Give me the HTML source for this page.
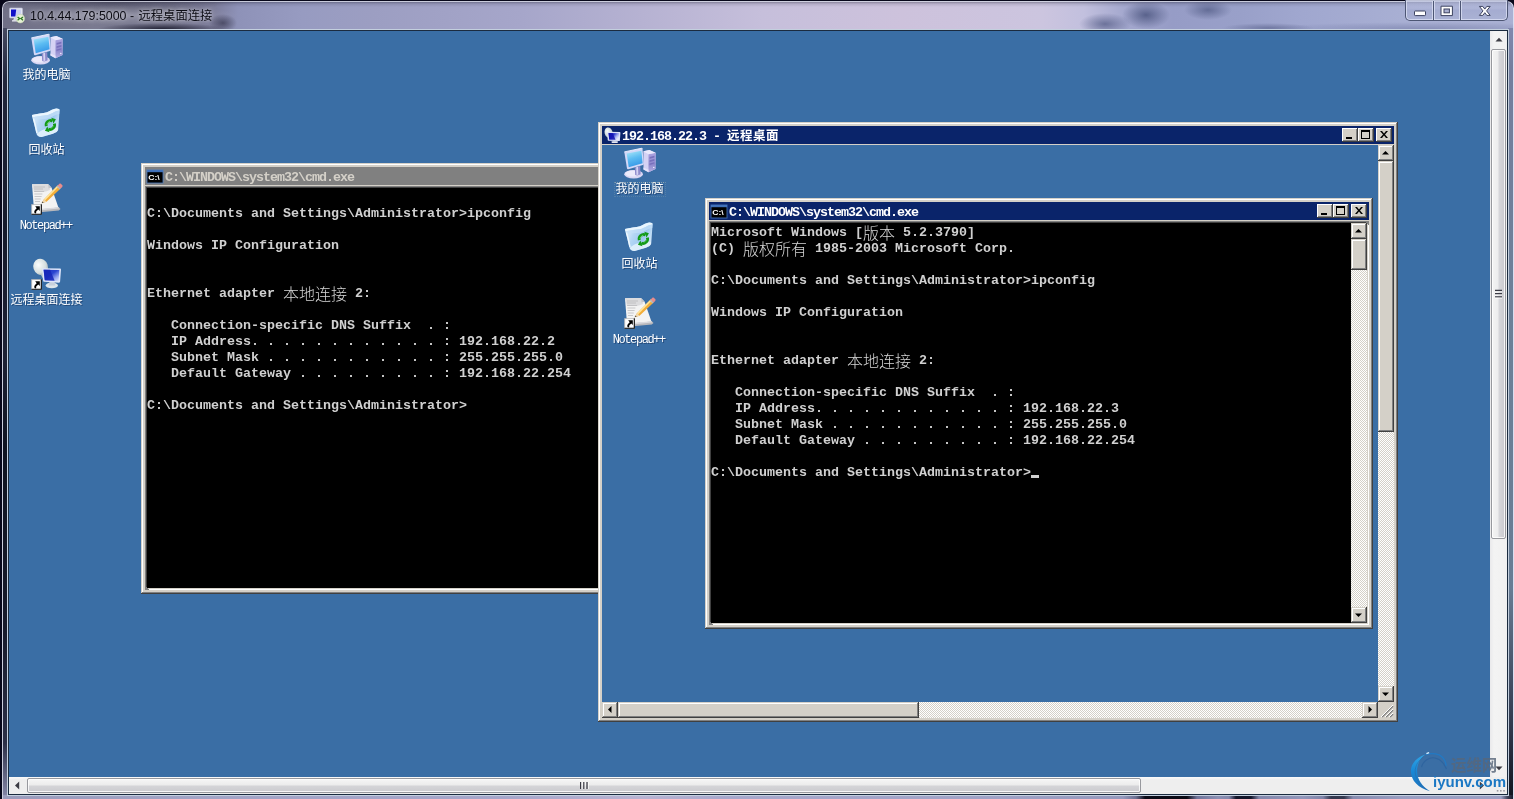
<!DOCTYPE html>
<html lang="zh-CN">
<head>
<meta charset="utf-8">
<title>10.4.44.179:5000 - 远程桌面连接</title>
<style>
*{box-sizing:border-box;margin:0;padding:0}
html,body{width:1514px;height:799px;overflow:hidden;background:#07071a}
body{position:relative;font-family:"Liberation Sans","Noto Sans CJK SC",sans-serif}
.abs{position:absolute}
/* ---------- Win7 aero frame ---------- */
#w7{position:absolute;left:2px;top:1px;width:1512px;height:806px;border-radius:7px 7px 0 0;overflow:hidden;
 background:
  linear-gradient(180deg,rgba(30,30,50,.5) 0,rgba(30,30,50,.12) 3px,rgba(30,30,50,0) 6px),
  radial-gradient(ellipse 64px 6px at 160px 28px,rgba(16,16,34,.8),rgba(16,16,34,0) 100%),
  radial-gradient(ellipse 14px 9px at 221px 22px,rgba(24,24,44,.5),rgba(24,24,44,0) 100%),
  radial-gradient(ellipse 120px 10px at 118px 14px,rgba(255,255,255,.2),rgba(255,255,255,0) 100%),
  radial-gradient(ellipse 110px 12px at 110px 2px,rgba(30,30,50,.3),rgba(30,30,50,0) 100%),
  radial-gradient(ellipse 26px 11px at 1103px 23px,rgba(84,92,134,.75),rgba(84,92,134,0) 100%),
  radial-gradient(ellipse 24px 14px at 1144px 14px,rgba(72,82,124,.8),rgba(72,82,124,0) 100%),
  radial-gradient(ellipse 24px 10px at 1206px 9px,rgba(78,88,130,.7),rgba(78,88,130,0) 100%),
  radial-gradient(ellipse 46px 5px at 1266px 27px,rgba(84,92,134,.6),rgba(84,92,134,0) 100%),
  radial-gradient(ellipse 160px 7px at 1420px 28px,rgba(84,92,140,.38),rgba(84,92,140,0) 100%),
  linear-gradient(90deg,#6f6f86 0,#7a7a90 90px,#74748c 170px,#7c7c9a 212px,#8e92b8 236px,#979bc1 300px,#9c9ec2 370px,#a6a6ca 520px,#b6b2d2 640px,#c6bfdb 760px,#cdc2dc 900px,#ccc5df 1040px,#c2c0de 1082px,#a4a8ce 1122px,#969cc6 1170px,#99a0c9 1240px,#a0a7cf 1300px,#a8afd3 1400px,#a9b0d3 1512px);
 box-shadow:inset 0 0 0 1px rgba(235,238,250,.75)}
#w7l{left:3px;top:28px;width:4px;height:772px;background:linear-gradient(180deg,#464a62 0,#22263c 50px,#15192b 200px,#1d2135 330px,#0f1321 420px,#171a2b 600px,#2c3048 715px,#8486a6 768px)}
#w7r{left:1508px;top:28px;width:5px;height:772px;background:linear-gradient(180deg,#8088ae 0,#747e9e 40px,#6c8098 300px,#687c94 560px,#30384c 700px,#10141e 770px)}
#w7b{left:3px;top:795px;width:1510px;height:5px;background:linear-gradient(90deg,#9a9cbc 0,#a2a4c6 200px,#a6a6ca 500px,#b9b3d2 640px,#a8a8cc 720px,#a0a2c6 1000px,#9498bc 1120px,#6c7092 1133px,#0c0c18 1142px,#0a0a14 1184px,#70749a 1194px,#8c90b4 1215px,#8488ac 1226px,#14162a 1233px,#14162a 1248px,#8488ac 1256px,#9296ba 1300px,#8084a8 1320px,#34384e 1328px,#34384e 1341px,#888cb0 1350px,#9a9ec2 1400px,#9ca0c4 1498px,#3a3e54 1505px,#1a1c2c 1510px)}
#cli{left:7px;top:29px;width:1502px;height:767px;border:1px solid rgba(225,236,250,.85);background:#1b2b3f;padding:1px}
#desk{left:9px;top:31px;width:1481px;height:746px;background:#3a6ea5}
/* win7 scrollbars */
#vs{left:1490px;top:31px;width:17px;height:746px;background:linear-gradient(90deg,#e9e9eb 0,#f3f3f3 4px,#f0f0f0 100%)}
#hs{left:9px;top:777px;width:1481px;height:17px;background:linear-gradient(180deg,#fbfbfb 0,#eeeeee 3px,#eeeeee 100%)}
#sc{left:1490px;top:777px;width:17px;height:17px;background:#eeeeee}
.th7{position:absolute;border:1px solid #98999e;border-radius:2px;box-shadow:inset 0 0 0 1px rgba(255,255,255,.8)}
/* ---------- classic widgets ---------- */
.win{position:absolute;background:#d4d0c8;box-shadow:inset -1px -1px #404040,inset 1px 1px #d4d0c8,inset -2px -2px #808080,inset 2px 2px #fff}
.tb{position:absolute;height:18px;background:#0a246a;color:#fff;font-weight:bold;white-space:pre}
.tb.in{background:#808080;color:#d4d0c8}
.tbt{position:absolute;top:2px;height:18px;line-height:18px;font-family:"Liberation Mono","Noto Sans CJK SC",monospace;font-size:13.333px;letter-spacing:-1px;font-weight:bold}
.tbt .cj{font-family:"Noto Sans CJK SC",sans-serif;font-size:12.5px;letter-spacing:.5px;position:relative;top:0}
.btn{position:absolute;background:#d4d0c8;box-shadow:inset -1px -1px #404040,inset 1px 1px #fff,inset -2px -2px #808080,inset 2px 2px #d4d0c8}
.sbtn{position:absolute;width:16px;height:16px;background:#d4d0c8;box-shadow:inset -1px -1px #404040,inset 1px 1px #d4d0c8,inset -2px -2px #808080,inset 2px 2px #fff}
.trk{position:absolute;background-color:#e9e7e3;background-image:conic-gradient(#fff 25%,#d4d0c8 0 50%,#fff 0 75%,#d4d0c8 0);background-size:2px 2px}
.sunk{position:absolute;background:#000;box-shadow:-1px -1px #404040,1px 1px #d4d0c8,-2px -2px #808080,2px 2px #fff,-2px 2px #808080,2px -2px #808080,-1px 1px #404040,1px -1px #404040}
.con{position:absolute;background:#000;color:#d0d0d0;font-family:"Liberation Mono","Noto Sans CJK SC",monospace;font-size:13.333px;font-weight:bold;overflow:hidden}
.con div{height:16px;line-height:16px;white-space:pre;position:relative;top:2px}
.con .cj{font-family:"Noto Sans CJK SC",sans-serif;font-size:16px;font-weight:300;line-height:16px;display:inline-block;height:16px;vertical-align:top;position:relative;top:-1px;color:#d6d6d6}
svg{position:absolute;overflow:visible}
.lbl{position:absolute;width:100px;height:14px;line-height:14px;text-align:center;color:#fff;font-family:"Liberation Mono","Noto Sans CJK SC",monospace;font-size:12px;white-space:pre;text-shadow:1px 1px 0 rgba(16,40,80,.55)}
.lbl.en{letter-spacing:-1.4px}
</style>
</head>
<body>
<div id="root" style="position:absolute;left:0;top:0;width:1514px;height:799px;will-change:transform">
<!-- WIN7 FRAME -->
<div id="w7"></div>
<div class="abs" id="w7l"></div>
<div class="abs" id="w7r"></div>
<div class="abs" id="w7b"></div>
<div class="abs" id="cli"></div>
<div class="abs" id="desk"></div>
<div class="abs" id="vs"></div>
<div class="abs" id="hs"></div>
<div class="abs" id="sc"></div>
<!-- win7 title -->
<svg style="left:9px;top:7px" width="17" height="17" viewBox="0 0 17 17">
 <rect x="0.5" y="1" width="13" height="10" rx="1" fill="#e4e6f4" stroke="#b8bcd4" stroke-width=".6"/>
 <rect x="2" y="2.6" width="10" height="6.8" fill="#c9d0f0"/>
 <path d="M2 2.6h5.2l-.9 6.8H2z" fill="#1010c8"/>
 <path d="M5 11h4l1 2.6H4z" fill="#d8dae8"/>
 <rect x="3" y="13.2" width="8" height="1.3" fill="#e8e8f2"/>
 <circle cx="11.3" cy="11.6" r="4.3" fill="#e6f0d6" stroke="#c4d4b0" stroke-width=".6"/>
 <path d="M8.6 10l2 1.6-2 1.6M14 10l-2 1.6 2 1.6" fill="none" stroke="#2e7a22" stroke-width="1.3"/>
</svg>
<div class="abs" id="w7t" style="left:30px;top:7px;height:18px;line-height:18px;font-size:12.4px;color:#0c0c14;white-space:pre;text-shadow:0 0 6px rgba(255,255,255,.55),0 0 3px rgba(255,255,255,.35)">10.4.44.179:5000 - <span style="font-size:12.3px;margin-left:1px">远程桌面连接</span></div>
<!-- caption buttons -->
<div class="abs" style="left:1405px;top:0;width:103px;height:21px;border:1px solid #4d5674;border-top:0;border-radius:0 0 5px 5px;background:linear-gradient(180deg,rgba(190,196,228,.55) 0,rgba(176,182,216,.5) 45%,rgba(160,168,206,.5) 50%,rgba(172,180,214,.5) 100%);box-shadow:inset 0 0 0 1px rgba(225,230,248,.7)"></div>
<div class="abs" style="left:1433px;top:1px;width:1px;height:19px;background:#4d5674;box-shadow:1px 0 rgba(225,230,248,.7),-1px 0 rgba(225,230,248,.7)"></div>
<div class="abs" style="left:1460px;top:1px;width:1px;height:19px;background:#4d5674;box-shadow:1px 0 rgba(225,230,248,.7),-1px 0 rgba(225,230,248,.7)"></div>
<svg style="left:1405px;top:0" width="103" height="21" viewBox="0 0 103 21">
 <rect x="9.5" y="11" width="11" height="4.6" rx=".8" fill="#fff" stroke="#3c4260" stroke-width="1"/>
 <path d="M36 6.2h11.4v9.4H36z" fill="#fff" stroke="#3c4260" stroke-width="1"/>
 <rect x="39" y="9" width="5.4" height="3.8" fill="#a9afd0" stroke="#3c4260" stroke-width="1"/>
 <path d="M74.4 6.4h3.4l2 2.7 2-2.7h3.4l-3.6 4.5 3.6 4.5h-3.4l-2-2.7-2 2.7h-3.4l3.6-4.5z" fill="#fff" stroke="#3c4260" stroke-width="1" stroke-linejoin="round"/>
</svg>

<!-- win7 scrollbars -->
<svg style="left:1490px;top:31px" width="17" height="17" viewBox="0 0 17 17"><path d="M5.5 10.5L9 6.8l3.5 3.7z" fill="#3c3c44"/></svg>
<div class="th7" style="left:1491px;top:49px;width:15px;height:490px;background:linear-gradient(90deg,#f4f4f4 0,#ededee 45%,#d6d6da 55%,#c9c9ce 100%)"></div>
<svg style="left:1494px;top:289px" width="9" height="9" viewBox="0 0 9 9"><path d="M1 1.5h7M1 4.7h7M1 7.9h7" stroke="#3a3a44" stroke-width="1.4"/><path d="M1 2.7h7M1 5.9h7M1 9.1h7" stroke="#fff" stroke-width=".8"/></svg>
<svg style="left:1490px;top:760px" width="17" height="17" viewBox="0 0 17 17"><path d="M5.5 6.5L9 10.2l3.5-3.7z" fill="#3c3c44"/></svg>
<svg style="left:9px;top:777px" width="17" height="17" viewBox="0 0 17 17"><path d="M10.2 4.6L6 8.5l4.2 3.9z" fill="#3c3c44"/></svg>
<div class="th7" style="left:27px;top:778px;width:1114px;height:15px;background:linear-gradient(180deg,#f6f6f6 0,#ececec 45%,#d4d4d7 55%,#cbcbcf 100%)"></div>
<svg style="left:579px;top:781px" width="10" height="9" viewBox="0 0 10 9"><path d="M1.7 1v7M4.9 1v7M8.1 1v7" stroke="#3a3a44" stroke-width="1.4"/><path d="M2.9 1v7M6.1 1v7M9.3 1v7" stroke="#fff" stroke-width=".8"/></svg>
<svg style="left:1473px;top:777px" width="17" height="17" viewBox="0 0 17 17"><path d="M6.8 4.6L11 8.5l-4.2 3.9z" fill="#3c3c44"/></svg>
<svg style="left:1490px;top:777px" width="17" height="17" viewBox="0 0 17 17"><g fill="#9c9ca4"><rect x="13.200" y="13" width="1.600" height="1.600"/><rect x="10" y="13" width="1.600" height="1.600"/><rect x="6.800" y="13" width="1.600" height="1.600"/></g></svg>

<!-- desktop icons -->
<svg style="left:31px;top:33px" width="32" height="32" viewBox="0 0 32 32"><defs><linearGradient id="scr1" x1=".3" y1="0" x2=".6" y2="1"><stop offset="0" stop-color="#a4e4f8"/><stop offset=".45" stop-color="#5cbcf2"/><stop offset="1" stop-color="#3294e6"/></linearGradient>
<linearGradient id="twr1" x1="0" y1="0" x2="0" y2="1"><stop offset="0" stop-color="#aaa2e0"/><stop offset=".6" stop-color="#8f88cc"/><stop offset="1" stop-color="#b4aee4"/></linearGradient></defs>
<g transform="translate(0,1)">
<ellipse cx="9.600" cy="26.200" rx="9.400" ry="4.200" fill="#d9d6f3"/>
<ellipse cx="8.600" cy="25.600" rx="7.400" ry="3" fill="#eceafa"/>
<path d="M10.800 19.500l5.400-1.600.4 8.400c-1.600 1.200-4.200 1.400-5.400.6z" fill="#8d8acb"/>
<path d="M12.200 19.200l1.800-.5.300 8-1.800.2z" fill="#d4d2f2"/>
<path d="M19.400 3.300l6-1.300 6.200 2.800-.1 16.200-7 3.300-5-2.700z" fill="#d5d2f4"/>
<path d="M24.500 6.200l7.100-1.400-.1 16.200-7 3.300z" fill="url(#twr1)"/>
<path d="M19.400 3.300l6-1.300 6.200 2.800-7.100 1.400z" fill="#ebe9fc"/>
<path d="M19.400 19.500l5.100 2.300v2.500l-5-2.700z" fill="#e6e4fa"/>
<path d="M25.600 9l4.800-1.200v1.700l-4.800 1.300zM25.600 12.300l4.800-1.300v1.700l-4.800 1.300zM25.600 15.600l4.800-1.300v1.300l-4.800 1.300z" fill="#7870bc"/>
<circle cx="29.800" cy="19.400" r=".7" fill="#f4f4ff"/>
<path d="M.3 3.900L17.300.3c.7-.1 1.100.2 1.200.8l1.300 14.600c0 .7-.3 1.100-.9 1.300L4.200 21.300c-.7.100-1.100-.1-1.200-.7z" fill="#d3d8f8"/>
<path d="M2.700 5.600L17.400 2.700l1.200 12.500L4.700 19.200z" fill="url(#scr1)"/>
<path d="M.3 3.900L17.300.3c.7-.1 1.100.2 1.200.8" fill="none" stroke="#f0f3ff" stroke-width=".9"/></g></svg>
<div class="lbl" style="left:-3.5px;top:69px">我的电脑</div>
<svg style="left:31px;top:108px" width="32" height="32" viewBox="0 0 32 32"><defs><linearGradient id="bin2" x1="0" y1=".2" x2="1" y2=".6"><stop offset="0" stop-color="#e9f4fd"/><stop offset=".35" stop-color="#b4d6f4"/><stop offset=".7" stop-color="#9cc8f0"/><stop offset="1" stop-color="#d6eafa"/></linearGradient></defs>
<g transform="translate(0,1)">
<path d="M1 6C6 4.500 12 4.500 16 3.200 20 1.800 22.500-.6 25.500-.4c2 .2 3.300.6 3.100 1.900L27.200 20.500c-.2 2-2.200 3-5.200 4.300L11.500 27.800c-2.500.7-5.300-.8-6.100-3.300z" fill="url(#bin2)"/>
<path d="M1 6C6 4.500 12 4.500 16 3.200 20 1.800 22.500-.6 25.500-.4c2 .2 3.300.6 3.100 1.900C24 1.800 21 4.800 17 6 12 7.200 6 6.500 1.400 8.400z" fill="#eaf6fe"/>
<path d="M1.400 8.400C6 6.500 12 7.200 17 6c4-1.200 7-4.200 11.600-4.500l-.3 3.500C24 5.500 21 8.500 17 9.600 12 10.800 6.500 9.800 2.200 11.600z" fill="#c4e0f8" opacity=".7"/>
<path d="M5.700 25.200c2.500-3.600 12-7.600 21.200-6.200l-.1 1.500c-.2 2-2.200 3-5.200 4.300L11.500 27.800c-2.500.7-5-.6-5.800-2.600z" fill="#e2f1fc" opacity=".92"/>
<path d="M2.400 9.500c1.600 5 2.600 9.500 3.600 14.500" stroke="#f4fbff" stroke-width="1.500" fill="none" opacity=".85"/>
<g fill="none" stroke="#139a18" stroke-width="2.900">
<path d="M15.300 17.200A4.500 4.500 0 0 1 21.400 11.900"/>
<path d="M23.400 14.600A4.500 4.500 0 0 1 17.300 20"/>
</g>
<path d="M20.300 8.800l4.600 1.400-2.400 4.400zM18.500 23.200l-4.600-1.500 2.500-4.300z" fill="#139a18"/>
<path d="M16 15.600c.4-1.500 1.600-2.700 3.200-3.100" stroke="#8fe48f" stroke-width=".9" fill="none"/>
<path d="M22.600 16.400c-.4 1.400-1.500 2.500-3 2.900" stroke="#5cc85c" stroke-width=".8" fill="none"/></g></svg>
<div class="lbl" style="left:-3.5px;top:144px">回收站</div>
<svg style="left:31px;top:183px" width="32" height="32" viewBox="0 0 32 32"><defs><linearGradient id="pen3" x1="0" y1="0" x2="1" y2="1"><stop offset="0" stop-color="#ffd060"/><stop offset="1" stop-color="#e89018"/></linearGradient></defs>
<path d="M3.500 29.800l24.300-2.300 1.700-1.600L27.600 24 3 26.500z" fill="#b8b8bc"/>
<path d="M1 1.200L17 1l3.600 3.800 6.800 19.600L3 27z" fill="#f3f3f3"/>
<path d="M1 1.200L17 1l2 6-4 1.500L3 9z" fill="#dcdcde"/>
<path d="M17 1l3.600 3.800-3 .6z" fill="#c4c4c8"/>
<g stroke="#b4b4b8" stroke-width=".7"><path d="M3 4h11M3 6h9M3.200 8.500h10M3.400 11h8M3.600 13.500h7M3.800 16h6M4 18.500h5"/></g>
<path d="M3 26.500l24.500-2.200.4 1.200L3.400 28z" fill="#dadade"/>
<path d="M10.600 20.200l2.400-4L26.600 2.500l3 3L15.500 18.800z" fill="url(#pen3)"/>
<path d="M13 16.200L26.600 2.500l1.100 1.100L14 17.400z" fill="#ffe49a"/>
<path d="M26.600 2.500l1.600-1.600c.6-.5 1.300-.5 1.800 0l1.200 1.200c.5.500.5 1.200 0 1.800l-1.600 1.600z" fill="#e88c8c"/>
<path d="M25.600 3.500l1-1 3 3-1 1z" fill="#b8b8c0"/>
<path d="M10.600 20.200l2.400-4 2.500 2.600z" fill="#f0d8b0"/>
<path d="M10.600 20.200l1-1.700 1 1z" fill="#404040"/><rect x=".4" y="21.300" width="10.400" height="10.400" fill="#fff"/><path d="M10.300 21.300v9.900H.4" fill="none" stroke="#000" stroke-width="1.100"/><path d="M.7 31V21.600h9.300" fill="none" stroke="#8a8a8a" stroke-width=".5"/>
<path d="M4.200 23.300h4.600v4.600l-1.500-1.500-1.600 1.500c-.7.700-.8 1.300-.3 2.100l-1.300.6c-1.200-1.300-1.100-2.700.1-3.900l1.500-1.500z" fill="#000"/></svg>
<div class="lbl en" style="left:-4.2px;top:219px">Notepad++</div>
<svg style="left:31px;top:258px" width="32" height="32" viewBox="0 0 32 32"><defs><radialGradient id="dish4" cx=".4" cy=".35" r=".7"><stop offset="0" stop-color="#fbfdfd"/><stop offset=".7" stop-color="#d5dede"/><stop offset="1" stop-color="#a8b4b8"/></radialGradient>
<linearGradient id="rscr4" x1="0" y1="0" x2="1" y2="1"><stop offset="0" stop-color="#1a2cc0"/><stop offset=".45" stop-color="#2a44d0"/><stop offset=".75" stop-color="#98a8f0"/><stop offset="1" stop-color="#dde4fc"/></linearGradient></defs>
<ellipse cx="9.600" cy="8.800" rx="7.300" ry="8.200" fill="url(#dish4)" transform="rotate(-18 9.6 8.8)"/>
<path d="M10 17l3-4.500 1.500 6.500-2 2.500z" fill="#b8c4c8"/>
<ellipse cx="20.800" cy="27.400" rx="6.200" ry="2.800" fill="#dfe6ea"/>
<path d="M18.500 24h5l.8 3.400h-6.600z" fill="#c8d0dc"/>
<path d="M11 10.200l17.800.2c.8 0 1.200.4 1.200 1.200l-.9 12c-.1.800-.5 1.200-1.300 1.200L13.400 23.800c-.8-.1-1.200-.5-1.300-1.300z" fill="#dfe6fa"/>
<path d="M12.600 11.700l15.800.3-.8 11-13.800-.7z" fill="url(#rscr4)"/>
<path d="M12.600 11.700l6.500.1 4.500 10.900-9.800-.4z" fill="#1626b8" opacity=".85"/><rect x=".4" y="21.300" width="10.400" height="10.400" fill="#fff"/><path d="M10.300 21.300v9.900H.4" fill="none" stroke="#000" stroke-width="1.100"/><path d="M.7 31V21.600h9.300" fill="none" stroke="#8a8a8a" stroke-width=".5"/>
<path d="M4.200 23.300h4.600v4.600l-1.500-1.500-1.600 1.500c-.7.700-.8 1.300-.3 2.100l-1.300.6c-1.200-1.300-1.100-2.700.1-3.900l1.500-1.500z" fill="#000"/></svg>
<div class="lbl" style="left:-3.5px;top:294px">远程桌面连接</div>

<!-- left cmd window -->
<div class="win" style="left:141px;top:163px;width:668px;height:431px"><div class="tb in" style="left:4px;top:4px;width:660px"><svg style="left:2px;top:3px" width="16" height="13" viewBox="0 0 16 13"><rect x="0" y="0" width="16" height="13" fill="#000"/><rect x="0" y="0" width="16" height="2.2" fill="#3f6fb8"/><rect x="0" y="0" width="16" height="13" fill="none" stroke="#4a7ac0" stroke-width="1" opacity=".8"/><text x="1.2" y="10.3" font-family="Liberation Sans,sans-serif" font-weight="bold" font-size="7.6" fill="#fff" textLength="11.500" lengthAdjust="spacingAndGlyphs">C:\</text></svg><span class="tbt" style="left:20px">C:\WINDOWS\system32\cmd.exe</span></div><div class="sunk" style="left:6px;top:25px;width:656px;height:400px"></div><div class="con" style="left:6px;top:25px;width:640px;height:400px"><div> </div><div>C:\Documents and Settings\Administrator&gt;ipconfig</div><div> </div><div>Windows IP Configuration</div><div> </div><div> </div><div>Ethernet adapter <span class="cj">本地连接</span> 2:</div><div> </div><div>   Connection-specific DNS Suffix  . :</div><div>   IP Address. . . . . . . . . . . . : 192.168.22.2</div><div>   Subnet Mask . . . . . . . . . . . : 255.255.255.0</div><div>   Default Gateway . . . . . . . . . : 192.168.22.254</div><div> </div><div>C:\Documents and Settings\Administrator&gt;</div></div></div>

<!-- inner remote desktop window -->
<div class="win" style="left:598px;top:122px;width:800px;height:600px"><div class="tb" style="left:4px;top:4px;width:792px"><svg style="left:2px;top:1px" width="17" height="17" viewBox="0 0 17 17"><defs><radialGradient id="dsh" cx=".4" cy=".35" r=".7"><stop offset="0" stop-color="#f6fafa"/><stop offset=".7" stop-color="#ccd6d8"/><stop offset="1" stop-color="#98a6ac"/></radialGradient><linearGradient id="tsc" x1="0" y1="0" x2="1" y2=".6"><stop offset="0" stop-color="#1414b4"/><stop offset=".45" stop-color="#2a34cc"/><stop offset=".75" stop-color="#a4aef0"/><stop offset="1" stop-color="#e4e8fc"/></linearGradient></defs>
<ellipse cx="4.600" cy="5.600" rx="4" ry="5.200" fill="url(#dsh)" transform="rotate(-15 4.6 5.6)"/>
<path d="M5 10.500l2-2.500.5 4z" fill="#a8b4b8"/>
<rect x="7.400" y="14.300" width="6.600" height="1.600" rx=".8" fill="#dfe4f0"/>
<path d="M9.300 13.500h3l.4 1.200H8.900z" fill="#c4cce0"/>
<path d="M3.200 4.800l12.500.2c.5 0 .7.300.7.700l-.5 7.700c0 .5-.3.700-.8.700L4.500 13.700c-.5 0-.7-.3-.8-.700z" fill="#dde2f8"/>
<path d="M4.600 6.100l10.500.2-.4 6.600-9.500-.4z" fill="url(#tsc)"/>
<path d="M4.600 6.100l4.200.1 2.700 6.500-6.300-.2z" fill="#1212b0" opacity=".85"/>
</svg><span class="tbt" style="left:20px;top:0">192.168.22.3 - <span class="cj">远程桌面</span></span></div><div class="btn" style="left:744px;top:6px;width:16px;height:14px"><svg style="left:4px;top:9px" width="6" height="2"><rect width="6" height="2" fill="#000"/></svg></div><div class="btn" style="left:760px;top:6px;width:16px;height:14px"><svg style="left:3px;top:2px" width="9" height="9"><rect x=".5" y="1" width="8" height="7.500" fill="none" stroke="#000" stroke-width="1"/><rect x="0" y="0" width="9" height="2" fill="#000"/></svg></div><div class="btn" style="left:778px;top:6px;width:16px;height:14px"><svg style="left:4px;top:3px" width="8" height="7"><path d="M0 0h2l2 2.500L6 0h2L5 3.500 8 7H6L4 4.500 2 7H0l3-3.500z" fill="#000"/></svg></div><div class="abs" style="left:4px;top:23px;width:776px;height:557px;background:#3a6ea5"></div><div class="trk" style="left:780px;top:23px;width:16px;height:557px"></div><div class="sbtn" style="left:780px;top:23px"><svg style="left:0;top:0" width="16" height="16"><path d="M4 9.500L7.500 6l3.500 3.500z" fill="#000"/></svg></div><div class="sbtn" style="left:780px;top:39px;height:271px"></div><div class="sbtn" style="left:780px;top:564px"><svg style="left:0;top:0" width="16" height="16"><path d="M4 6.500L7.500 10 11 6.500z" fill="#000"/></svg></div><div class="trk" style="left:4px;top:580px;width:776px;height:16px"></div><div class="sbtn" style="left:4px;top:580px"><svg style="left:0;top:0" width="16" height="16"><path d="M9.500 4L6 7.500 9.500 11z" fill="#000"/></svg></div><div class="sbtn" style="left:20px;top:580px;width:301px"></div><div class="sbtn" style="left:764px;top:580px"><svg style="left:0;top:0" width="16" height="16"><path d="M6.500 4L10 7.500 6.500 11z" fill="#000"/></svg></div><div class="abs" style="left:780px;top:580px;width:16px;height:16px;background:#d4d0c8"><svg style="left:0;top:0" width="16" height="16"><path d="M15 4L4 15M15 8L8 15M15 12l-3 3" stroke="#808080" stroke-width="1.500"/><path d="M15 3L3 15M15 7l-8 8M15 11l-4 4" stroke="#fff" stroke-width="1"/></svg></div></div>
<svg style="left:624px;top:147px" width="32" height="32" viewBox="0 0 32 32"><defs><linearGradient id="scr5" x1=".3" y1="0" x2=".6" y2="1"><stop offset="0" stop-color="#a4e4f8"/><stop offset=".45" stop-color="#5cbcf2"/><stop offset="1" stop-color="#3294e6"/></linearGradient>
<linearGradient id="twr5" x1="0" y1="0" x2="0" y2="1"><stop offset="0" stop-color="#aaa2e0"/><stop offset=".6" stop-color="#8f88cc"/><stop offset="1" stop-color="#b4aee4"/></linearGradient></defs>
<g transform="translate(0,1)">
<ellipse cx="9.600" cy="26.200" rx="9.400" ry="4.200" fill="#d9d6f3"/>
<ellipse cx="8.600" cy="25.600" rx="7.400" ry="3" fill="#eceafa"/>
<path d="M10.800 19.500l5.400-1.600.4 8.400c-1.600 1.200-4.200 1.400-5.400.6z" fill="#8d8acb"/>
<path d="M12.200 19.200l1.800-.5.300 8-1.800.2z" fill="#d4d2f2"/>
<path d="M19.400 3.300l6-1.300 6.200 2.800-.1 16.200-7 3.300-5-2.700z" fill="#d5d2f4"/>
<path d="M24.500 6.200l7.100-1.400-.1 16.200-7 3.300z" fill="url(#twr5)"/>
<path d="M19.400 3.300l6-1.300 6.200 2.800-7.100 1.400z" fill="#ebe9fc"/>
<path d="M19.400 19.500l5.100 2.300v2.500l-5-2.700z" fill="#e6e4fa"/>
<path d="M25.600 9l4.800-1.200v1.700l-4.800 1.300zM25.600 12.300l4.800-1.300v1.700l-4.800 1.300zM25.600 15.600l4.800-1.300v1.300l-4.800 1.300z" fill="#7870bc"/>
<circle cx="29.800" cy="19.400" r=".7" fill="#f4f4ff"/>
<path d="M.3 3.900L17.300.3c.7-.1 1.100.2 1.200.8l1.300 14.600c0 .7-.3 1.100-.9 1.300L4.200 21.300c-.7.100-1.100-.1-1.200-.7z" fill="#d3d8f8"/>
<path d="M2.700 5.600L17.400 2.700l1.200 12.500L4.700 19.200z" fill="url(#scr5)"/>
<path d="M.3 3.900L17.300.3c.7-.1 1.100.2 1.200.8" fill="none" stroke="#f0f3ff" stroke-width=".9"/></g></svg><div class="lbl" style="left:589.5px;top:183px">我的电脑</div><div class="abs" style="left:614px;top:182px;width:52px;height:15px;border:1px dotted rgba(240,228,190,.14);border-top-color:rgba(240,228,190,.45)"></div><svg style="left:624px;top:222px" width="32" height="32" viewBox="0 0 32 32"><defs><linearGradient id="bin6" x1="0" y1=".2" x2="1" y2=".6"><stop offset="0" stop-color="#e9f4fd"/><stop offset=".35" stop-color="#b4d6f4"/><stop offset=".7" stop-color="#9cc8f0"/><stop offset="1" stop-color="#d6eafa"/></linearGradient></defs>
<g transform="translate(0,1)">
<path d="M1 6C6 4.500 12 4.500 16 3.200 20 1.800 22.500-.6 25.500-.4c2 .2 3.300.6 3.100 1.900L27.200 20.500c-.2 2-2.200 3-5.200 4.300L11.500 27.800c-2.500.7-5.300-.8-6.100-3.300z" fill="url(#bin6)"/>
<path d="M1 6C6 4.500 12 4.500 16 3.200 20 1.800 22.500-.6 25.500-.4c2 .2 3.300.6 3.100 1.900C24 1.800 21 4.800 17 6 12 7.200 6 6.500 1.400 8.400z" fill="#eaf6fe"/>
<path d="M1.400 8.400C6 6.500 12 7.200 17 6c4-1.200 7-4.200 11.600-4.500l-.3 3.500C24 5.500 21 8.500 17 9.600 12 10.800 6.500 9.800 2.200 11.600z" fill="#c4e0f8" opacity=".7"/>
<path d="M5.700 25.200c2.500-3.600 12-7.600 21.200-6.200l-.1 1.500c-.2 2-2.200 3-5.200 4.300L11.500 27.800c-2.500.7-5-.6-5.800-2.600z" fill="#e2f1fc" opacity=".92"/>
<path d="M2.400 9.500c1.600 5 2.600 9.500 3.600 14.500" stroke="#f4fbff" stroke-width="1.500" fill="none" opacity=".85"/>
<g fill="none" stroke="#139a18" stroke-width="2.900">
<path d="M15.300 17.200A4.500 4.500 0 0 1 21.400 11.900"/>
<path d="M23.400 14.600A4.500 4.500 0 0 1 17.300 20"/>
</g>
<path d="M20.300 8.800l4.600 1.400-2.400 4.400zM18.500 23.200l-4.600-1.500 2.500-4.300z" fill="#139a18"/>
<path d="M16 15.600c.4-1.500 1.600-2.700 3.200-3.100" stroke="#8fe48f" stroke-width=".9" fill="none"/>
<path d="M22.600 16.400c-.4 1.400-1.500 2.500-3 2.900" stroke="#5cc85c" stroke-width=".8" fill="none"/></g></svg><div class="lbl" style="left:589.5px;top:258px">回收站</div><svg style="left:624px;top:297px" width="32" height="32" viewBox="0 0 32 32"><defs><linearGradient id="pen7" x1="0" y1="0" x2="1" y2="1"><stop offset="0" stop-color="#ffd060"/><stop offset="1" stop-color="#e89018"/></linearGradient></defs>
<path d="M3.500 29.800l24.300-2.300 1.700-1.600L27.600 24 3 26.500z" fill="#b8b8bc"/>
<path d="M1 1.200L17 1l3.600 3.800 6.800 19.600L3 27z" fill="#f3f3f3"/>
<path d="M1 1.200L17 1l2 6-4 1.500L3 9z" fill="#dcdcde"/>
<path d="M17 1l3.600 3.800-3 .6z" fill="#c4c4c8"/>
<g stroke="#b4b4b8" stroke-width=".7"><path d="M3 4h11M3 6h9M3.200 8.500h10M3.400 11h8M3.600 13.500h7M3.800 16h6M4 18.500h5"/></g>
<path d="M3 26.500l24.500-2.200.4 1.200L3.400 28z" fill="#dadade"/>
<path d="M10.600 20.200l2.400-4L26.600 2.500l3 3L15.500 18.800z" fill="url(#pen7)"/>
<path d="M13 16.200L26.600 2.500l1.100 1.100L14 17.400z" fill="#ffe49a"/>
<path d="M26.600 2.500l1.600-1.600c.6-.5 1.300-.5 1.800 0l1.200 1.200c.5.500.5 1.200 0 1.800l-1.600 1.600z" fill="#e88c8c"/>
<path d="M25.600 3.500l1-1 3 3-1 1z" fill="#b8b8c0"/>
<path d="M10.600 20.200l2.400-4 2.500 2.600z" fill="#f0d8b0"/>
<path d="M10.600 20.200l1-1.700 1 1z" fill="#404040"/><rect x=".4" y="21.300" width="10.400" height="10.400" fill="#fff"/><path d="M10.300 21.300v9.900H.4" fill="none" stroke="#000" stroke-width="1.100"/><path d="M.7 31V21.600h9.300" fill="none" stroke="#8a8a8a" stroke-width=".5"/>
<path d="M4.200 23.300h4.600v4.600l-1.500-1.500-1.600 1.500c-.7.700-.8 1.300-.3 2.100l-1.300.6c-1.200-1.300-1.100-2.700.1-3.900l1.500-1.500z" fill="#000"/></svg><div class="lbl en" style="left:588.8px;top:333px">Notepad++</div>
<div class="win" style="left:705px;top:198px;width:668px;height:431px"><div class="tb" style="left:4px;top:4px;width:660px"><svg style="left:2px;top:3px" width="16" height="13" viewBox="0 0 16 13"><rect x="0" y="0" width="16" height="13" fill="#000"/><rect x="0" y="0" width="16" height="2.2" fill="#3f6fb8"/><rect x="0" y="0" width="16" height="13" fill="none" stroke="#4a7ac0" stroke-width="1" opacity=".8"/><text x="1.2" y="10.3" font-family="Liberation Sans,sans-serif" font-weight="bold" font-size="7.6" fill="#fff" textLength="11.500" lengthAdjust="spacingAndGlyphs">C:\</text></svg><span class="tbt" style="left:20px">C:\WINDOWS\system32\cmd.exe</span></div><div class="btn" style="left:612px;top:6px;width:16px;height:14px"><svg style="left:4px;top:9px" width="6" height="2"><rect width="6" height="2" fill="#000"/></svg></div><div class="btn" style="left:628px;top:6px;width:16px;height:14px"><svg style="left:3px;top:2px" width="9" height="9"><rect x=".5" y="1" width="8" height="7.500" fill="none" stroke="#000" stroke-width="1"/><rect x="0" y="0" width="9" height="2" fill="#000"/></svg></div><div class="btn" style="left:646px;top:6px;width:16px;height:14px"><svg style="left:4px;top:3px" width="8" height="7"><path d="M0 0h2l2 2.500L6 0h2L5 3.500 8 7H6L4 4.500 2 7H0l3-3.500z" fill="#000"/></svg></div><div class="sunk" style="left:6px;top:25px;width:656px;height:400px"></div><div class="trk" style="left:646px;top:25px;width:16px;height:400px"></div><div class="sbtn" style="left:646px;top:25px"><svg style="left:0;top:0" width="16" height="16"><path d="M4 9.500L7.500 6l3.500 3.500z" fill="#000"/></svg></div><div class="sbtn" style="left:646px;top:41px;height:31px"></div><div class="sbtn" style="left:646px;top:409px"><svg style="left:0;top:0" width="16" height="16"><path d="M4 6.500L7.500 10 11 6.500z" fill="#000"/></svg></div><div class="con" style="left:6px;top:25px;width:640px;height:400px"><div>Microsoft Windows [<span class="cj">版本</span> 5.2.3790]</div><div>(C) <span class="cj">版权所有</span> 1985-2003 Microsoft Corp.</div><div> </div><div>C:\Documents and Settings\Administrator&gt;ipconfig</div><div> </div><div>Windows IP Configuration</div><div> </div><div> </div><div>Ethernet adapter <span class="cj">本地连接</span> 2:</div><div> </div><div>   Connection-specific DNS Suffix  . :</div><div>   IP Address. . . . . . . . . . . . : 192.168.22.3</div><div>   Subnet Mask . . . . . . . . . . . : 255.255.255.0</div><div>   Default Gateway . . . . . . . . . : 192.168.22.254</div><div> </div><div>C:\Documents and Settings\Administrator&gt;<span style="display:inline-block;width:8px;height:3px;background:#d0d0d0;vertical-align:baseline;position:relative;top:2px"></span></div></div></div>

<!-- watermark -->
<svg style="left:1408px;top:750px" width="44" height="46" viewBox="0 0 44 46">
 <defs><linearGradient id="sw" x1="0" y1="0" x2="0" y2="1"><stop offset="0" stop-color="#2fa4e6"/><stop offset=".45" stop-color="#1888d6"/><stop offset="1" stop-color="#1c70ba"/></linearGradient></defs>
 <path d="M17.300 4.600C8.500 7.500 2.600 13.800 2.900 21.500 3.300 30.500 10 38.200 22 41.200 14 36.500 9.300 29.500 9.100 21.500 8.900 14.500 11.800 8.600 17.300 4.600z" fill="url(#sw)"/>
 <path d="M15.600 6.800C10.300 10.800 7.100 15.800 7.200 21.500 7.400 28.300 11 34.300 17.200 38.600" fill="none" stroke="#2c69a8" stroke-width=".8" opacity=".75"/>
 <path d="M17.300 4.600C22 3.200 27 3.300 31 4.800c4 1.800 6.500 5.600 7.200 11" fill="none" stroke="#1c7ccc" stroke-width="1.300" opacity=".8"/>
 <path d="M13.500 17C15.500 10.500 21 7 27 8c5 .9 9 5 11.500 11" fill="none" stroke="#2a5f9c" stroke-width="1.100" opacity=".7"/>
 <path d="M18.400 3.600l2.700-1" stroke="#d8f0ff" stroke-width="1.300"/>
</svg>
<div class="abs" style="left:1451px;top:753px;width:50px;height:22px;line-height:22px;font-family:'Noto Sans CJK SC',sans-serif;font-weight:700;font-size:15.400px;color:rgba(88,102,122,.82);white-space:pre">运维网</div>
<div class="abs" style="left:1433px;top:771px;width:80px;height:22px;line-height:22px;font-family:'Liberation Sans',sans-serif;font-weight:bold;font-size:15px;color:#1b78c4;white-space:pre">iyunv.com</div>
</div>
</body>
</html>
